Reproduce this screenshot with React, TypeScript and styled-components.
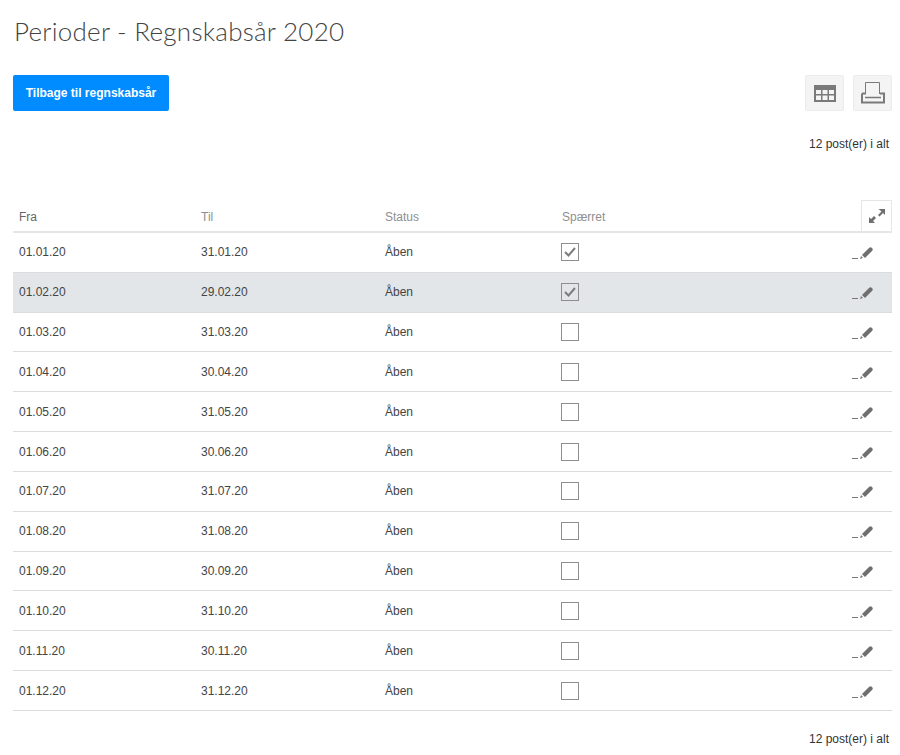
import styled, { createGlobalStyle } from 'styled-components';

const GlobalStyle = createGlobalStyle`
  html, body {
    margin: 0;
    padding: 0;
    background: #fff;
    font-family: "Liberation Sans", Arial, sans-serif;
    color: #333;
  }
`;

const Page = styled.div`
  width: 900px;
  height: 755px;
  padding: 0 8px 0 13px;
  box-sizing: border-box;
  overflow: hidden;
`;

const Title = styled.h1`
  margin: 0;
  padding-top: 16px;
  height: 59px;
  padding-left: 1px;
  font-family: Lato, sans-serif;
  font-weight: 300;
  font-size: 26px;
  line-height: 30px;
  color: #444;
  letter-spacing: 0.25px;
`;

const Toolbar = styled.div`
  display: flex;
  justify-content: space-between;
  align-items: flex-start;
  height: 37px;
`;

const BackButton = styled.button`
  width: 156px;
  height: 36px;
  border: 0;
  border-radius: 2px;
  padding: 0;
  background: #008cff;
  color: #fff;
  font-family: inherit;
  font-size: 12px;
  font-weight: 700;
`;

const ToolButtons = styled.div`
  display: flex;
  gap: 9px;
`;

const ToolButton = styled.div`
  width: 39px;
  height: 36px;
  display: flex;
  align-items: center;
  justify-content: center;
  background: #f4f4f4;
  border: 1px solid #ebebeb;
  border-radius: 2px;
  box-sizing: border-box;
`;

const Count = styled.div<{ $top: number }>`
  padding-top: ${({ $top }) => $top}px;
  padding-right: 3px;
  text-align: right;
  font-size: 12px;
  line-height: 14px;
  color: #333;
`;

const Table = styled.div`
  margin-top: 49px;
`;

const HeaderRow = styled.div`
  display: grid;
  grid-template-columns: 182px 184px 177px 1fr 31px;
  height: 33px;
  box-sizing: border-box;
  border-bottom: 2px solid #e6e6e6;
  align-items: center;
  font-size: 12px;
  color: #8f8f8f;
`;

const HeaderCell = styled.div<{ $dark?: boolean }>`
  padding-left: 6px;
  padding-top: 3px;
  color: ${({ $dark }) => ($dark ? '#666' : '#8f8f8f')};
`;

const ExpandCell = styled.div`
  width: 31px;
  height: 31px;
  box-sizing: border-box;
  border: 1px solid #e6e6e6;
  border-bottom: 0;
  display: flex;
  align-items: center;
  justify-content: center;
`;

const Row = styled.div<{ $selected: boolean }>`
  display: grid;
  grid-template-columns: 182px 184px 177px 1fr 40px;
  height: 39.83px;
  box-sizing: border-box;
  border-bottom: 1px solid #dcdcdc;
  align-items: center;
  font-size: 12px;
  color: #444;
  background: ${({ $selected }) => ($selected ? '#e2e6e9' : 'transparent')};
`;

const Cell = styled.div`
  padding-left: 6px;
`;

const CheckCell = styled.div`
  padding-left: 5px;
  display: flex;
`;

const CheckBox = styled.div`
  width: 16px;
  height: 16px;
  border: 1px solid #8e8e8e;
  display: flex;
  align-items: center;
  justify-content: center;
`;

const EditCell = styled.div`
  display: flex;
  padding-top: 2px;
`;

const TableIcon = () => (
  <svg width="22" height="17" viewBox="0 0 22 17">
    <rect x="0" y="0" width="22" height="17" fill="#7a7a7a" />
    <g fill="#f4f4f4">
      <rect x="2" y="5" width="5" height="4" />
      <rect x="8.5" y="5" width="5" height="4" />
      <rect x="15" y="5" width="5" height="4" />
      <rect x="2" y="10.5" width="5" height="4.5" />
      <rect x="8.5" y="10.5" width="5" height="4.5" />
      <rect x="15" y="10.5" width="5" height="4.5" />
    </g>
  </svg>
);

const PrintIcon = () => (
  <svg width="24" height="22" viewBox="0 0 24 22" fill="none" stroke="#7a7a7a">
    <path d="M4.5 12V.5h14V12" strokeWidth="1" />
    <path d="M1 11.5v9h22v-9h-4M1 11.5h4" strokeWidth="2" />
    <path d="M4 15.5h16" strokeWidth="1.5" />
  </svg>
);

const ExpandIcon = () => (
  <svg width="16" height="14" viewBox="0 0 16 14" fill="#6f6f6f">
    <path d="M9.5 0H16v6l-2-2-3.5 3.5-1.5-1.5L12.5 2.500z" />
    <path d="M0 8l2 2 3-3 2 2-3 3 2 2H0z" />
  </svg>
);

const CheckIcon = () => (
  <svg width="12" height="10" viewBox="0 0 12 10" fill="none" stroke="#7d7d7d" strokeWidth="2">
    <path d="M1 5l3.500 3.500L11 1" />
  </svg>
);

const EditIcon = () => (
  <svg width="24" height="16" viewBox="0 0 24 16">
    <rect x="0" y="13" width="6" height="1" fill="#777" />
    <path d="M8 14l1-3 2 2z" fill="#777" />
    <path d="M10 10l7-7c1-1 2-1 3 0s1 2 0 3l-7 7z" fill="#6f6f6f" />
  </svg>
);

const periods = [
  ['01.01.20', '31.01.20', true],
  ['01.02.20', '29.02.20', true],
  ['01.03.20', '31.03.20', false],
  ['01.04.20', '30.04.20', false],
  ['01.05.20', '31.05.20', false],
  ['01.06.20', '30.06.20', false],
  ['01.07.20', '31.07.20', false],
  ['01.08.20', '31.08.20', false],
  ['01.09.20', '30.09.20', false],
  ['01.10.20', '31.10.20', false],
  ['01.11.20', '30.11.20', false],
  ['01.12.20', '31.12.20', false],
] as const;

export default function App() {
  return (
    <Page>
      <GlobalStyle />
      <Title>Perioder - Regnskabsår 2020</Title>
      <Toolbar>
        <BackButton>Tilbage til regnskabsår</BackButton>
        <ToolButtons>
          <ToolButton>
            <TableIcon />
          </ToolButton>
          <ToolButton>
            <PrintIcon />
          </ToolButton>
        </ToolButtons>
      </Toolbar>
      <Count $top={25}>12 post(er) i alt</Count>
      <Table>
        <HeaderRow>
          <HeaderCell $dark>Fra</HeaderCell>
          <HeaderCell>Til</HeaderCell>
          <HeaderCell>Status</HeaderCell>
          <HeaderCell>Spærret</HeaderCell>
          <ExpandCell>
            <ExpandIcon />
          </ExpandCell>
        </HeaderRow>
        {periods.map(([from, to, locked], i) => (
          <Row key={from} $selected={i === 1}>
            <Cell>{from}</Cell>
            <Cell>{to}</Cell>
            <Cell>Åben</Cell>
            <CheckCell>
              <CheckBox>{locked && <CheckIcon />}</CheckBox>
            </CheckCell>
            <EditCell>
              <EditIcon />
            </EditCell>
          </Row>
        ))}
      </Table>
      <Count $top={21}>12 post(er) i alt</Count>
    </Page>
  );
}
